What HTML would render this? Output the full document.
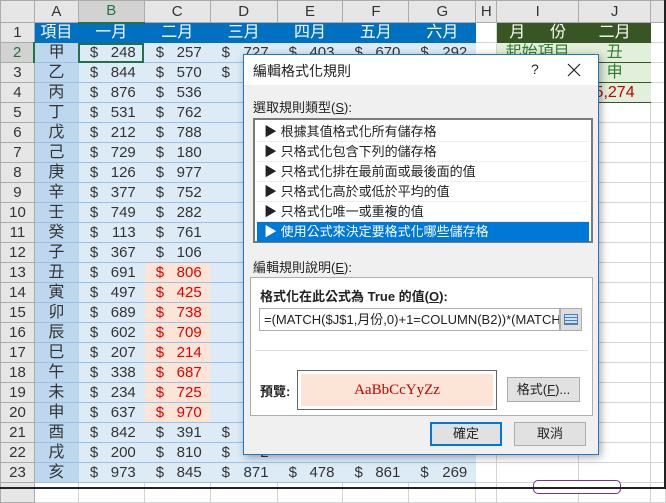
<!DOCTYPE html>
<html><head><meta charset="utf-8"><style>
*{margin:0;padding:0;box-sizing:border-box}
body{width:666px;height:489px;overflow:hidden;background:#fff;font-family:"Liberation Sans","Noto Sans CJK TC",sans-serif;position:relative}
table{border-collapse:collapse;table-layout:fixed;position:absolute;left:0;top:0}
td{height:20px;border:1px solid #d4d4d4;font-size:15px;color:#333;white-space:nowrap;overflow:hidden;padding:0;text-align:center;line-height:18px}
tr.h td{height:22px;background:#e6e6e6;border-color:#ababab;color:#333;font-size:15px}
td.rh{background:#e6e6e6;border-color:#ababab;text-align:center;font-size:15px}
td.a{background:#bdd7ee;border-color:#bdd7ee #bdd7ee #9bc2e6;font-size:16px}
td.d{background:#ddebf7;border-color:#ddebf7 #ddebf7 #9bc2e6;text-align:left;padding:0 8px 0 11px}
td.d span{float:right}
td.r{background:#fce4d6;color:#e00000}
td.t{background:#0070c0;color:#fff;border-color:#0070c0;font-size:16px}
td.g{background:#375623;color:#fff;border-color:#375623;font-size:16px}
td.lg{background:#e2efda;color:#2e7d32;border-color:#e2efda #e2efda #375623;font-size:16px}
.dlg{position:absolute;left:243px;top:54px;width:356px;height:401px;background:#f0f0f0;border:1px solid #1979ca;box-shadow:2px 2px 8px rgba(0,0,0,.35);font-size:13px;color:#222}
.abs{position:absolute}
.li{height:20px;line-height:19px;border-bottom:1px solid #eee;padding-left:7px}
</style></head><body>
<table>
<colgroup><col style="width:34px"><col style="width:44px"><col style="width:66px"><col style="width:66px"><col style="width:67px"><col style="width:66px"><col style="width:66px"><col style="width:67px"><col style="width:21px"><col style="width:82px"><col style="width:72px"><col style="width:15px"></colgroup>
<tr class="h"><td style="background:#e6e6e6"></td><td>A</td><td style="background:#d2d2d2;color:#217346;border-bottom:2px solid #217346">B</td><td>C</td><td>D</td><td>E</td><td>F</td><td>G</td><td>H</td><td>I</td><td>J</td><td></td></tr>
<tr><td class="rh">1</td><td class="t">項目</td><td class="t">一月</td><td class="t">二月</td><td class="t">三月</td><td class="t">四月</td><td class="t">五月</td><td class="t">六月</td><td></td><td class="g" style="text-align:justify;text-align-last:justify;padding:0 12px">月 份</td><td class="g">二月</td><td></td></tr>
<tr><td class="rh" style="background:#d2d2d2;color:#217346;border-right:2px solid #217346">2</td><td class="a">甲</td><td class="d" style="outline:2px solid #217346;outline-offset:-2px">$<span>248</span></td><td class="d">$<span>257</span></td><td class="d">$<span>727</span></td><td class="d">$<span>403</span></td><td class="d">$<span>670</span></td><td class="d">$<span>292</span></td><td></td><td class="lg">起始項目</td><td class="lg">丑</td><td></td></tr>
<tr><td class="rh">3</td><td class="a">乙</td><td class="d">$<span>844</span></td><td class="d">$<span>570</span></td><td class="d">$<span>5</span></td><td class="d"></td><td class="d"></td><td class="d"></td><td></td><td class="lg">結束項目</td><td class="lg">申</td><td></td></tr>
<tr><td class="rh">4</td><td class="a">丙</td><td class="d">$<span>876</span></td><td class="d">$<span>536</span></td><td class="d"></td><td class="d"></td><td class="d"></td><td class="d"></td><td></td><td class="lg">合計</td><td class="lg" style="color:#c00000">5,274</td><td></td></tr>
<tr><td class="rh">5</td><td class="a">丁</td><td class="d">$<span>531</span></td><td class="d">$<span>762</span></td><td class="d"></td><td class="d"></td><td class="d"></td><td class="d"></td><td></td><td></td><td></td><td></td></tr>
<tr><td class="rh">6</td><td class="a">戊</td><td class="d">$<span>212</span></td><td class="d">$<span>788</span></td><td class="d"></td><td class="d"></td><td class="d"></td><td class="d"></td><td></td><td></td><td></td><td></td></tr>
<tr><td class="rh">7</td><td class="a">己</td><td class="d">$<span>729</span></td><td class="d">$<span>180</span></td><td class="d"></td><td class="d"></td><td class="d"></td><td class="d"></td><td></td><td></td><td></td><td></td></tr>
<tr><td class="rh">8</td><td class="a">庚</td><td class="d">$<span>126</span></td><td class="d">$<span>977</span></td><td class="d"></td><td class="d"></td><td class="d"></td><td class="d"></td><td></td><td></td><td></td><td></td></tr>
<tr><td class="rh">9</td><td class="a">辛</td><td class="d">$<span>377</span></td><td class="d">$<span>752</span></td><td class="d"></td><td class="d"></td><td class="d"></td><td class="d"></td><td></td><td></td><td></td><td></td></tr>
<tr><td class="rh">10</td><td class="a">壬</td><td class="d">$<span>749</span></td><td class="d">$<span>282</span></td><td class="d"></td><td class="d"></td><td class="d"></td><td class="d"></td><td></td><td></td><td></td><td></td></tr>
<tr><td class="rh">11</td><td class="a">癸</td><td class="d">$<span>113</span></td><td class="d">$<span>761</span></td><td class="d"></td><td class="d"></td><td class="d"></td><td class="d"></td><td></td><td></td><td></td><td></td></tr>
<tr><td class="rh">12</td><td class="a">子</td><td class="d">$<span>367</span></td><td class="d">$<span>106</span></td><td class="d"></td><td class="d"></td><td class="d"></td><td class="d"></td><td></td><td></td><td></td><td></td></tr>
<tr><td class="rh">13</td><td class="a">丑</td><td class="d">$<span>691</span></td><td class="d r">$<span>806</span></td><td class="d"></td><td class="d"></td><td class="d"></td><td class="d"></td><td></td><td></td><td></td><td></td></tr>
<tr><td class="rh">14</td><td class="a">寅</td><td class="d">$<span>497</span></td><td class="d r">$<span>425</span></td><td class="d"></td><td class="d"></td><td class="d"></td><td class="d"></td><td></td><td></td><td></td><td></td></tr>
<tr><td class="rh">15</td><td class="a">卯</td><td class="d">$<span>689</span></td><td class="d r">$<span>738</span></td><td class="d"></td><td class="d"></td><td class="d"></td><td class="d"></td><td></td><td></td><td></td><td></td></tr>
<tr><td class="rh">16</td><td class="a">辰</td><td class="d">$<span>602</span></td><td class="d r">$<span>709</span></td><td class="d"></td><td class="d"></td><td class="d"></td><td class="d"></td><td></td><td></td><td></td><td></td></tr>
<tr><td class="rh">17</td><td class="a">巳</td><td class="d">$<span>207</span></td><td class="d r">$<span>214</span></td><td class="d"></td><td class="d"></td><td class="d"></td><td class="d"></td><td></td><td></td><td></td><td></td></tr>
<tr><td class="rh">18</td><td class="a">午</td><td class="d">$<span>338</span></td><td class="d r">$<span>687</span></td><td class="d"></td><td class="d"></td><td class="d"></td><td class="d"></td><td></td><td></td><td></td><td></td></tr>
<tr><td class="rh">19</td><td class="a">未</td><td class="d">$<span>234</span></td><td class="d r">$<span>725</span></td><td class="d"></td><td class="d"></td><td class="d"></td><td class="d"></td><td></td><td></td><td></td><td></td></tr>
<tr><td class="rh">20</td><td class="a">申</td><td class="d">$<span>637</span></td><td class="d r">$<span>970</span></td><td class="d"></td><td class="d"></td><td class="d"></td><td class="d"></td><td></td><td></td><td></td><td></td></tr>
<tr><td class="rh">21</td><td class="a">酉</td><td class="d">$<span>842</span></td><td class="d">$<span>391</span></td><td class="d">$<span>2</span></td><td class="d"></td><td class="d"></td><td class="d"></td><td></td><td></td><td></td><td></td></tr>
<tr><td class="rh">22</td><td class="a">戌</td><td class="d">$<span>200</span></td><td class="d">$<span>810</span></td><td class="d">$<span>2</span></td><td class="d"></td><td class="d"></td><td class="d"></td><td></td><td></td><td></td><td></td></tr>
<tr><td class="rh">23</td><td class="a">亥</td><td class="d">$<span>973</span></td><td class="d">$<span>845</span></td><td class="d">$<span>871</span></td><td class="d">$<span>478</span></td><td class="d">$<span>861</span></td><td class="d">$<span>269</span></td><td></td><td></td><td></td><td></td></tr>
<tr><td class="rh"></td><td></td><td></td><td></td><td></td><td></td><td></td><td></td><td></td><td></td><td></td><td></td></tr>
</table>
<div class="abs" style="left:533px;top:480px;width:88px;height:14px;border:1px solid #7030a0;border-radius:5px;background:#fff"></div>
<div class="abs" style="left:0;top:487px;width:666px;height:2px;background:#222"></div>
<div class="abs" style="left:664px;top:0;width:2px;height:489px;background:#222"></div>

<div class="dlg">
 <div class="abs" style="left:0;top:0;width:354px;height:30px;background:#fff"></div>
 <div class="abs" style="left:9px;top:6px;font-size:14px">編輯格式化規則</div>
 <div class="abs" style="left:287px;top:6px;font-size:14px">?</div>
 <svg class="abs" style="left:323px;top:8px" width="14" height="14" viewBox="0 0 14 14"><path d="M1 1L13 13M13 1L1 13" stroke="#222" stroke-width="1.2" fill="none"/></svg>
 <div class="abs" style="left:9px;top:42px">選取規則類型(<u>S</u>):</div>
 <div class="abs" style="left:9px;top:63px;width:340px;height:125px;border:2px solid #7a7a7a;background:#fff">
  <div style="padding:2px 2px;font-size:13px">
   <div class="li">▶ 根據其值格式化所有儲存格</div>
   <div class="li">▶ 只格式化包含下列的儲存格</div>
   <div class="li">▶ 只格式化排在最前面或最後面的值</div>
   <div class="li">▶ 只格式化高於或低於平均的值</div>
   <div class="li">▶ 只格式化唯一或重複的值</div>
   <div class="li" style="background:#0078d7;color:#fff;border:0">▶ 使用公式來決定要格式化哪些儲存格</div>
  </div>
 </div>
 <div class="abs" style="left:9px;top:202px">編輯規則說明(<u>E</u>):</div>
 <div class="abs" style="left:6px;top:222px;width:343px;height:139px;border:1px solid #adadad;background:#fff">
  <div class="abs" style="left:9px;top:8px;font-weight:bold;color:#222">格式化在此公式為 True 的值(<u>O</u>):</div>
  <div class="abs" style="left:8px;top:30px;height:23px;border:1px solid #adadad;font-size:13px;line-height:21px;padding-left:4px;overflow:hidden;white-space:nowrap;width:301px">=(MATCH($J$1,月份,0)+1=COLUMN(B2))*(MATCH($</div>
  <div class="abs" style="left:309px;top:30px;width:22px;height:23px;background:#ddd;border:1px solid #adadad">
   <div style="margin:5px 3px;width:14px;height:11px;border:1px solid #4a7fbf;background:repeating-linear-gradient(#cfe0f5 0 2px,#4a7fbf 2px 3px)"></div>
  </div>
  <div class="abs" style="left:4px;top:72px;width:333px;height:1px;background:#ddd"></div>
  <div class="abs" style="left:9px;top:103px;font-weight:bold">預覽:</div>
  <div class="abs" style="left:46px;top:92px;width:200px;height:40px;border:1px solid #666;padding:3px;background:#fff"><div style="background:#fce4d6;height:100%;color:#c00000;font-family:'Liberation Serif',serif;font-size:15px;text-align:center;line-height:32px">AaBbCcYyZz</div></div>
  <div class="abs" style="left:256px;top:99px;width:73px;height:25px;border:1px solid #adadad;background:#e1e1e1;text-align:center;line-height:23px">格式(<u>F</u>)...</div>
 </div>
 <div class="abs" style="left:186px;top:367px;width:72px;height:24px;border:2px solid #0078d7;background:#e1e1e1;text-align:center;line-height:20px">確定</div>
 <div class="abs" style="left:270px;top:367px;width:72px;height:24px;border:1px solid #adadad;background:#e1e1e1;text-align:center;line-height:22px">取消</div>
</div>
</body></html>
